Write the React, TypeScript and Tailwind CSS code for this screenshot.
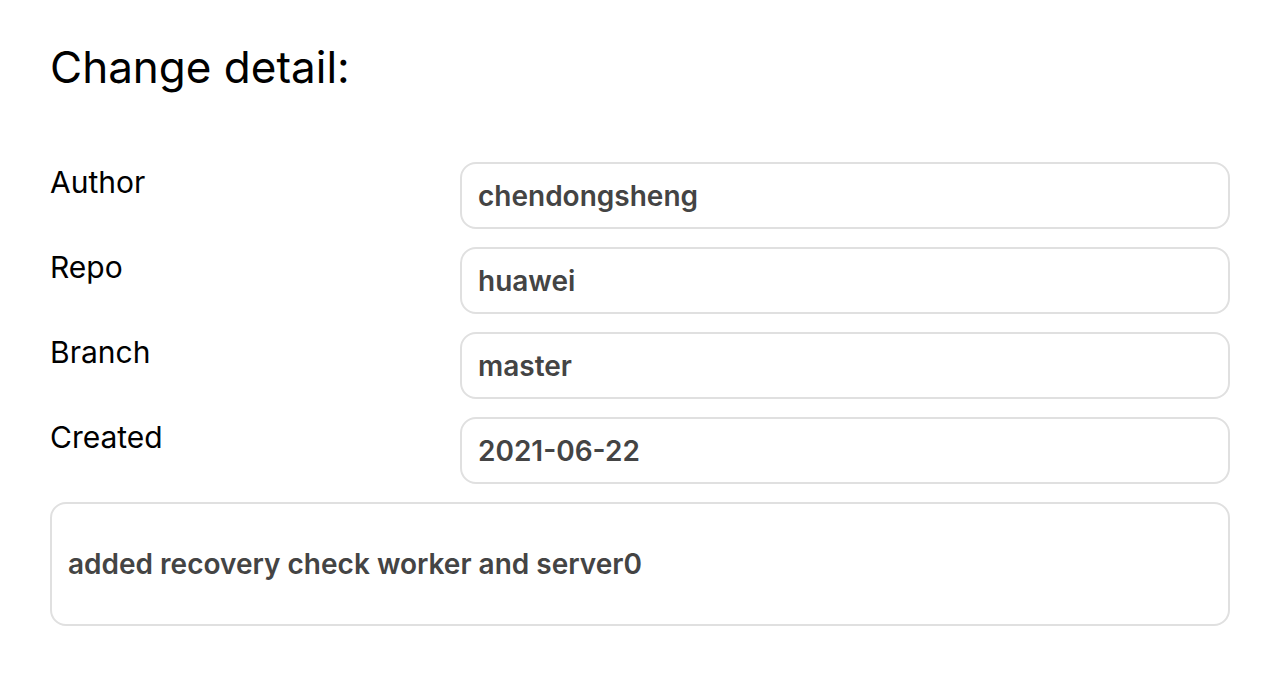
import React from 'react';

const fields = [
  { label: 'Author', value: 'chendongsheng' },
  { label: 'Repo', value: 'huawei' },
  { label: 'Branch', value: 'master' },
  { label: 'Created', value: '2021-06-22' },
];

const App: React.FC = () => {
  return (
    <div className="min-h-screen bg-white px-[50px] pt-[37px] font-['Inter',sans-serif] text-black">
      <h1 className="text-[44px] leading-[60px] font-normal mb-[65px]">Change detail:</h1>

      <div className="flex flex-col gap-[18px]">
        {fields.map((f) => (
          <div key={f.label} className="flex">
            <div className="w-[410px] shrink-0 text-[30px] leading-[40px]">{f.label}</div>
            <div className="flex-1 h-[67px] flex items-center px-[16px] rounded-[16px] border-2 border-[#e0e0e0] text-[28px] font-semibold text-[#444]">
              {f.value}
            </div>
          </div>
        ))}

        <div className="h-[124px] flex items-center px-[16px] rounded-[16px] border-2 border-[#e0e0e0] text-[28px] font-semibold text-[#444]">
          added recovery check worker and server0
        </div>
      </div>
    </div>
  );
};

export default App;
